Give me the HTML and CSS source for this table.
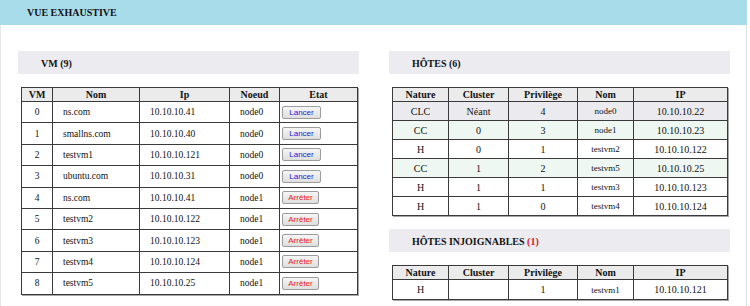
FILE: index.html
```html
<!DOCTYPE html>
<html lang="fr">
<head>
<meta charset="utf-8">
<title>Vue exhaustive</title>
<link rel="stylesheet" href="styles.css">
</head>
<body>
<div class="page">
  <div class="topbar">VUE EXHAUSTIVE</div>
  <div class="content">
    <div class="col">
      <div class="section-title">VM (9)</div>
      <table class="grid vm">
        <colgroup><col class="c-vm"><col class="c-nom"><col class="c-ip"><col class="c-noeud"><col class="c-etat"></colgroup>
        <thead>
          <tr><th>VM</th><th>Nom</th><th>Ip</th><th>Noeud</th><th>Etat</th></tr>
        </thead>
        <tbody>
          <tr><td class="ctr">0</td><td>ns.com</td><td>10.10.10.41</td><td>node0</td><td class="btncell"><button class="btn start">Lancer</button></td></tr>
          <tr><td class="ctr">1</td><td>smallns.com</td><td>10.10.10.40</td><td>node0</td><td class="btncell"><button class="btn start">Lancer</button></td></tr>
          <tr><td class="ctr">2</td><td>testvm1</td><td>10.10.10.121</td><td>node0</td><td class="btncell"><button class="btn start">Lancer</button></td></tr>
          <tr><td class="ctr">3</td><td>ubuntu.com</td><td>10.10.10.31</td><td>node0</td><td class="btncell"><button class="btn start">Lancer</button></td></tr>
          <tr><td class="ctr">4</td><td>ns.com</td><td>10.10.10.41</td><td>node1</td><td class="btncell"><button class="btn stop">Arrêter</button></td></tr>
          <tr><td class="ctr">5</td><td>testvm2</td><td>10.10.10.122</td><td>node1</td><td class="btncell"><button class="btn stop">Arrêter</button></td></tr>
          <tr><td class="ctr">6</td><td>testvm3</td><td>10.10.10.123</td><td>node1</td><td class="btncell"><button class="btn stop">Arrêter</button></td></tr>
          <tr><td class="ctr">7</td><td>testvm4</td><td>10.10.10.124</td><td>node1</td><td class="btncell"><button class="btn stop">Arrêter</button></td></tr>
          <tr><td class="ctr">8</td><td>testvm5</td><td>10.10.10.25</td><td>node1</td><td class="btncell"><button class="btn stop">Arrêter</button></td></tr>
        </tbody>
      </table>
    </div>
    <div class="col">
      <div class="section-title">HÔTES (6)</div>
      <table class="grid hosts">
        <colgroup><col class="c-nature"><col class="c-cluster"><col class="c-priv"><col class="c-hnom"><col class="c-hip"></colgroup>
        <thead>
          <tr><th>Nature</th><th>Cluster</th><th>Privilège</th><th>Nom</th><th>IP</th></tr>
        </thead>
        <tbody>
          <tr class="clc"><td>CLC</td><td>Néant</td><td>4</td><td class="small">node0</td><td>10.10.10.22</td></tr>
          <tr class="cc"><td>CC</td><td>0</td><td>3</td><td class="small">node1</td><td>10.10.10.23</td></tr>
          <tr><td>H</td><td>0</td><td>1</td><td class="small">testvm2</td><td>10.10.10.122</td></tr>
          <tr class="cc"><td>CC</td><td>1</td><td>2</td><td class="small">testvm5</td><td>10.10.10.25</td></tr>
          <tr><td>H</td><td>1</td><td>1</td><td class="small">testvm3</td><td>10.10.10.123</td></tr>
          <tr><td>H</td><td>1</td><td>0</td><td class="small">testvm4</td><td>10.10.10.124</td></tr>
        </tbody>
      </table>
      <div class="section-title spaced">HÔTES INJOIGNABLES <span class="alert">(1)</span></div>
      <table class="grid hosts">
        <colgroup><col class="c-nature"><col class="c-cluster"><col class="c-priv"><col class="c-hnom"><col class="c-hip"></colgroup>
        <thead>
          <tr><th>Nature</th><th>Cluster</th><th>Privilège</th><th>Nom</th><th>IP</th></tr>
        </thead>
        <tbody>
          <tr class="single"><td>H</td><td></td><td>1</td><td class="small">testvm1</td><td>10.10.10.121</td></tr>
        </tbody>
      </table>
    </div>
  </div>
</div>
</body>
</html>
```
FILE: styles.css
```css
* { box-sizing: border-box; }

html, body {
  margin: 0;
  padding: 0;
  background: #ffffff;
}

body {
  font-family: "Liberation Serif", "Times New Roman", serif;
  color: #111;
}

.page {
  width: 747px;
  height: 306px;
  border-left: 1px solid #e8e8e8;
  border-right: 1px solid #e2e2e2;
}

.topbar {
  height: 25px;
  margin: 0 -1px;
  background: #a8dcea;
  padding: 1px 0 0 27px;
  font-weight: bold;
  font-size: 10px;
  line-height: 24px;
  color: #111;
}

.content {
  display: grid;
  grid-template-columns: 341px 341px;
  column-gap: 30px;
  padding: 26px 0 0 17px;
  align-items: start;
}

.section-title {
  height: 23px;
  background: #ececf0;
  padding: 2px 0 0 23px;
  font-weight: bold;
  font-size: 10px;
  line-height: 21px;
}

.section-title.spaced { margin-top: 13px; }

.alert { color: #e0141e; }

.grid {
  border-collapse: collapse;
  margin: 13px 0 0 3px;
  border: 1px solid #3a3a3a;
  box-shadow: 1px 1px 0 #a8a8a8;
  table-layout: fixed;
}

.grid th, .grid td {
  border: 1px solid #3a3a3a;
  padding: 0;
}

.grid th {
  background: #ebebeb;
  font-weight: bold;
  font-size: 10px;
  height: 14px;
  line-height: 12px;
  text-align: center;
}

.vm { width: 336px; }
.vm col.c-vm { width: 31px; }
.vm col.c-nom { width: 87px; }
.vm col.c-ip { width: 90px; }
.vm col.c-noeud { width: 50px; }
.vm col.c-etat { width: 78px; }

.vm td {
  height: 21.4px;
  font-size: 9.5px;
  padding-left: 10px;
  text-align: left;
}

.vm td.ctr {
  padding-left: 0;
  text-align: center;
}

.vm td.btncell { padding-left: 2px; }

.btn {
  display: inline-block;
  height: 13px;
  padding: 0 6px;
  margin: 0;
  font-family: "Liberation Sans", Arial, sans-serif;
  font-size: 8px;
  line-height: 11px;
  border: 1px solid #9c9c9c;
  border-radius: 2px;
  background: linear-gradient(#f6f6f6, #dedede);
  vertical-align: middle;
}

.btn.start { width: 39px; color: #1f24d6; }
.btn.stop { width: 37px; color: #e41a23; padding: 0 4px; }

.hosts { width: 335px; }
.hosts col.c-nature { width: 56px; }
.hosts col.c-cluster { width: 60px; }
.hosts col.c-priv { width: 69px; }
.hosts col.c-hnom { width: 56px; }
.hosts col.c-hip { width: 94px; }

.hosts td {
  height: 19px;
  font-size: 10px;
  text-align: center;
  background: #ffffff;
}

.hosts td.small { font-size: 9px; }

.hosts tr.clc td { background: #ebebef; }
.hosts tr.cc td { background: #eef7f2; }
.hosts tr.single td { height: 20px; }
```
